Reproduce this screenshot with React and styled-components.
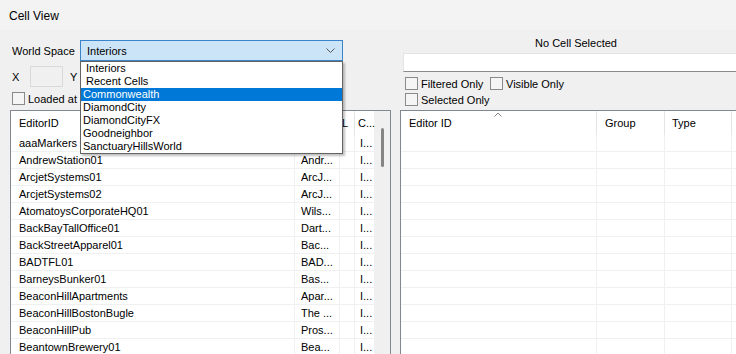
import React from 'react';
import styled, { createGlobalStyle } from 'styled-components';

const worlds = [
  { name: 'Interiors', indent: true },
  { name: 'Recent Cells', indent: true },
  { name: 'Commonwealth', selected: true },
  { name: 'DiamondCity' },
  { name: 'DiamondCityFX' },
  { name: 'Goodneighbor' },
  { name: 'SanctuaryHillsWorld' },
];

const cells = [
  ['aaaMarkers', '', '', 'I...'],
  ['AndrewStation01', 'Andr...', '', 'I...'],
  ['ArcjetSystems01', 'ArcJ...', '', 'I...'],
  ['ArcjetSystems02', 'ArcJ...', '', 'I...'],
  ['AtomatoysCorporateHQ01', 'Wils...', '', 'I...'],
  ['BackBayTallOffice01', 'Dart...', '', 'I...'],
  ['BackStreetApparel01', 'Bac...', '', 'I...'],
  ['BADTFL01', 'BAD...', '', 'I...'],
  ['BarneysBunker01', 'Bas...', '', 'I...'],
  ['BeaconHillApartments', 'Apar...', '', 'I...'],
  ['BeaconHillBostonBugle', 'The ...', '', 'I...'],
  ['BeaconHillPub', 'Pros...', '', 'I...'],
  ['BeantownBrewery01', 'Bea...', '', 'I...'],
];

const emptyRows = Array.from({ length: 13 });

function Check({ label, width }) {
  return (
    <CheckItem $width={width}>
      <CheckBox />
      <span>{label}</span>
    </CheckItem>
  );
}

export default function App() {
  return (
    <Window>
      <GlobalStyle />
      <TitleBar>Cell View</TitleBar>
      <Body>
        <LeftPane>
          <FieldRow $h={21}>
            <Label $w={68}>World Space</Label>
            <Combo>
              <span>Interiors</span>
              <svg width="9" height="5" viewBox="0 0 9 5">
                <path d="M0.5 0.5 L4.5 4.5 L8.5 0.5" fill="none" stroke="#555" strokeWidth="1" />
              </svg>
              <DropList>
                {worlds.map((w) => (
                  <DropItem key={w.name} $indent={w.indent} $selected={w.selected}>
                    {w.name}
                  </DropItem>
                ))}
              </DropList>
            </Combo>
          </FieldRow>
          <FieldRow $h={21} $mt={5}>
            <Label $w={18}>X</Label>
            <CoordBox />
            <Label $w={20} $ml={7}>Y</Label>
          </FieldRow>
          <FieldRow $h={13} $mt={5}>
            <Check label="Loaded at" />
          </FieldRow>
          <CellList $mt={5}>
            <Grid>
              <HeadRow $cols="284px 45px 15px 1fr">
                <HeadCell $pl={8}>EditorID</HeadCell>
                <HeadCell />
                <HeadCell $pl={2}>L</HeadCell>
                <HeadCell $pl={3}>C...</HeadCell>
              </HeadRow>
              {cells.map((row) => (
                <Row key={row[0]} $cols="284px 45px 15px 1fr">
                  <Cell $pl={8}>{row[0]}</Cell>
                  <Cell $pl={6}>{row[1]}</Cell>
                  <Cell>{row[2]}</Cell>
                  <Cell $pl={5}>{row[3]}</Cell>
                </Row>
              ))}
            </Grid>
            <ScrollTrack>
              <ScrollThumb />
            </ScrollTrack>
          </CellList>
        </LeftPane>
        <RightPane>
          <PaneTitle>No Cell Selected</PaneTitle>
          <SearchBox />
          <FieldRow $h={13} $mt={5} $pl={5}>
            <Check label="Filtered Only" width={85} />
            <Check label="Visible Only" />
          </FieldRow>
          <FieldRow $h={13} $mt={3} $pl={5}>
            <Check label="Selected Only" />
          </FieldRow>
          <CellList $mt={4}>
            <Grid>
              <HeadRow $cols="196px 68px 67px 1fr">
                <HeadCell $pl={8}>
                  Editor ID
                  <SortArrow width="8" height="5" viewBox="0 0 8 5">
                    <path d="M0.5 4.5 L4 1 L7.5 4.5" fill="none" stroke="#8a8a8a" strokeWidth="1" />
                  </SortArrow>
                </HeadCell>
                <HeadCell $pl={8}>Group</HeadCell>
                <HeadCell $pl={7}>Type</HeadCell>
                <HeadCell />
              </HeadRow>
              {emptyRows.map((_, i) => (
                <Row key={i} $cols="196px 68px 67px 1fr">
                  <Cell />
                  <Cell />
                  <Cell />
                  <Cell />
                </Row>
              ))}
            </Grid>
          </CellList>
        </RightPane>
      </Body>
    </Window>
  );
}

const GlobalStyle = createGlobalStyle`
  html, body {
    margin: 0;
    padding: 0;
    background: #f0f0f0;
  }
  body {
    font-family: "Liberation Sans", Arial, sans-serif;
    font-size: 11px;
    color: #000;
  }
  * {
    box-sizing: border-box;
  }
`;

const Window = styled.div`
  width: 736px;
  height: 354px;
  overflow: hidden;
  background: #f0f0f0;
  display: flex;
  flex-direction: column;
`;

const TitleBar = styled.div`
  height: 30px;
  flex: none;
  display: flex;
  align-items: center;
  padding: 2px 0 0 9px;
  background: #f3f3f3;
  font-size: 12px;
`;

const Body = styled.div`
  flex: 1;
  min-height: 0;
  display: flex;
  gap: 9px;
  padding-left: 10px;
`;

const LeftPane = styled.div`
  width: 381px;
  flex: none;
  display: flex;
  flex-direction: column;
  padding-top: 10px;
`;

const RightPane = styled.div`
  width: 352px;
  flex: none;
  display: flex;
  flex-direction: column;
  padding-top: 7px;
`;

const FieldRow = styled.div`
  height: ${(p) => p.$h}px;
  margin-top: ${(p) => p.$mt || 0}px;
  padding-left: ${(p) => (p.$pl === undefined ? 2 : p.$pl)}px;
  display: flex;
  align-items: center;
  flex: none;
`;

const Label = styled.span`
  width: ${(p) => p.$w}px;
  margin-left: ${(p) => p.$ml || 0}px;
  flex: none;
`;

const Combo = styled.div`
  position: relative;
  width: 263px;
  height: 21px;
  border: 1px solid #3a85c9;
  background: #cce4f7;
  display: flex;
  align-items: center;
  justify-content: space-between;
  padding: 0 7px 0 6px;
`;

const DropList = styled.div`
  position: absolute;
  top: 20px;
  left: -1px;
  width: 263px;
  background: #fff;
  border: 1px solid #646464;
  box-shadow: 2px 2px 2px rgba(0, 0, 0, 0.25);
  z-index: 5;
`;

const DropItem = styled.div`
  height: 13px;
  line-height: 13px;
  padding-left: ${(p) => (p.$indent ? 5 : 2)}px;
  background: ${(p) => (p.$selected ? '#0078d7' : 'transparent')};
  color: ${(p) => (p.$selected ? '#fff' : '#000')};
  white-space: nowrap;
`;

const CoordBox = styled.div`
  width: 33px;
  height: 21px;
  border: 1px solid #d9d9d9;
  background: #f0f0f0;
  flex: none;
`;

const CheckItem = styled.label`
  display: flex;
  align-items: center;
  gap: 3px;
  width: ${(p) => (p.$width ? `${p.$width}px` : 'auto')};
  flex: none;
  white-space: nowrap;
`;

const CheckBox = styled.span`
  width: 13px;
  height: 13px;
  border: 1px solid #8a8a8a;
  background: #f5f5f5;
  flex: none;
`;

const CellList = styled.div`
  margin-top: ${(p) => p.$mt}px;
  height: 270px;
  flex: none;
  display: flex;
  border: 1px solid #828790;
  background: #fff;
`;

const Grid = styled.div`
  flex: 1;
  min-width: 0;
  display: flex;
  flex-direction: column;
`;

const HeadRow = styled.div`
  display: grid;
  grid-template-columns: ${(p) => p.$cols};
  height: 24px;
  flex: none;
`;

const HeadCell = styled.div`
  position: relative;
  display: flex;
  align-items: center;
  padding-left: ${(p) => p.$pl || 0}px;
  border-right: 1px solid #e5e5e5;
  white-space: nowrap;
  &:last-child {
    border-right: none;
  }
`;

const SortArrow = styled.svg`
  position: absolute;
  top: 1px;
  left: 93px;
`;

const Row = styled.div`
  display: grid;
  grid-template-columns: ${(p) => p.$cols};
  height: 17px;
  border-bottom: 1px solid #f0f0f0;
  flex: none;
`;

const Cell = styled.div`
  display: flex;
  align-items: center;
  padding-left: ${(p) => p.$pl || 0}px;
  border-right: 1px solid #f0f0f0;
  white-space: nowrap;
  &:last-child {
    border-right: none;
  }
`;

const ScrollTrack = styled.div`
  width: 16px;
  flex: none;
  background: #f0f0f0;
  padding: 17px 0 0 7px;
`;

const ScrollThumb = styled.div`
  width: 3px;
  height: 39px;
  border-radius: 2px;
  background: #858585;
`;

const PaneTitle = styled.div`
  height: 13px;
  line-height: 13px;
  text-align: center;
  flex: none;
`;

const SearchBox = styled.div`
  margin: 3px 0 0 3px;
  height: 19px;
  flex: none;
  background: #fff;
  border: 1px solid #e3e3e3;
  border-bottom-color: #8a8a8a;
`;
